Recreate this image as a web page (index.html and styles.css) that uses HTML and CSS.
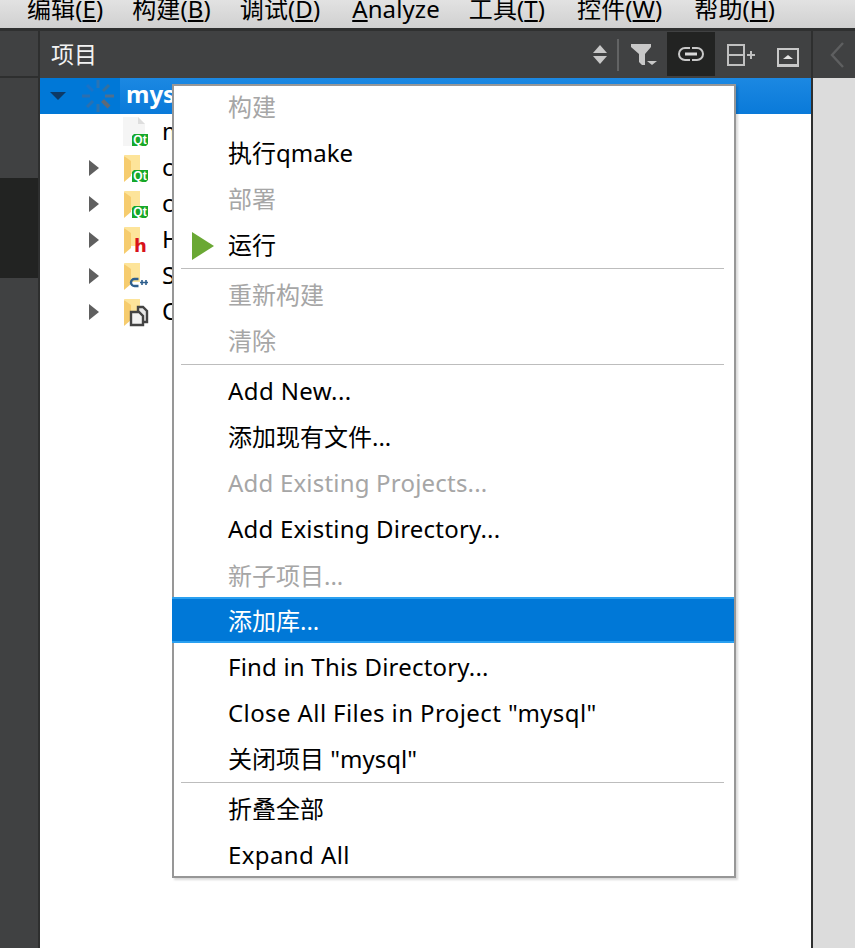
FILE: index.html
```html
<!DOCTYPE html>
<html lang="zh">
<head>
<meta charset="utf-8">
<title>Qt Creator</title>
<link rel="stylesheet" href="styles.css">
</head>
<body>
<nav class="menubar">
  <span class="mi">编辑(<u>E</u>)</span>
  <span class="mi">构建(<u>B</u>)</span>
  <span class="mi">调试(<u>D</u>)</span>
  <span class="mi mi-wide"><u>A</u>nalyze</span>
  <span class="mi">工具(<u>T</u>)</span>
  <span class="mi mi-wide">控件(<u>W</u>)</span>
  <span class="mi mi-wide">帮助(<u>H</u>)</span>
</nav>
<div class="main">
  <aside class="rail"><div class="rail-top"></div><div class="rail-active"></div></aside>
  <section class="panel">
    <header class="toolbar">
      <span class="title">项目</span>
      <div class="tools">
        <svg class="updown" width="14" height="20" viewBox="0 0 14 20"><path d="M7 0l7 8H0zM0 11h14l-7 8z" fill="#c8c8c8"/></svg>
        <span class="vsep"></span>
        <svg class="filter" width="28" height="22" viewBox="0 0 28 22"><path d="M1 0h20v3l-6 7v11h-3l-3-3v-8L1 3z" fill="#c8c8c8"/><path d="M17 17h10l-5 4z" fill="#c8c8c8"/></svg>
        <span class="active"><svg width="28" height="16" viewBox="0 0 28 16"><path d="M13 2H8a6 6 0 0 0 0 12h5M15 2h5a6 6 0 0 1 0 12h-5" fill="none" stroke="#c8c8c8" stroke-width="2"/><path d="M8 8h12" stroke="#d8d8d8" stroke-width="3"/></svg></span>
        <svg class="split" width="28" height="22" viewBox="0 0 28 22"><path d="M1 1h16v20H1zM1 11h16" fill="none" stroke="#c0c0c0" stroke-width="2"/><path d="M20 11h8M24 7v8" stroke="#c0c0c0" stroke-width="2"/></svg>
        <svg class="hide" width="22" height="19" viewBox="0 0 22 19"><path d="M1 1h20v16H1z" fill="none" stroke="#c8c8c8" stroke-width="2"/><path d="M0 16h22v3H0z" fill="#c8c8c8"/><path d="M6 11l5-4 5 4z" fill="#e4e4e4"/></svg>
      </div>
    </header>
    <div class="tree">
      <div class="row sel">
        <svg class="arrow" width="16" height="8" viewBox="0 0 16 8"><path d="M0 0h16L8 8z" fill="#0d3a66"/></svg>
        <svg class="spin" width="32" height="32" viewBox="0 0 32 32"><g stroke-width="3"><path d="M16 0v8" stroke="#2a74b4"/><path d="M27 5l-6 6" stroke="#33709f"/><path d="M32 16h-9" stroke="#4f6f8e"/><path d="M27 27l-6.500-6.500" stroke="#5d6a78" stroke-width="4"/><path d="M16 32v-8" stroke="#2f72ac"/><path d="M5 27l6-6" stroke="#2a70b0"/><path d="M0 16h8" stroke="#2a6fb0"/><path d="M5 5l6 6" stroke="#1a72c6"/></g></svg>
        <span class="name">mysql</span>
      </div>
      <div class="row file">
        <svg class="icon" width="36" height="30" viewBox="0 0 36 30"><path d="M0 0h15l7 7v22H0z" fill="#f5f5f5"/><path d="M15 0l7 7h-7z" fill="#dedede"/><path d="M11 17h14v10l-2 2H9V19z" fill="#16a82a"/><text x="17" y="27" class="qt">Qt</text></svg>
        <span class="label">mysql.pro</span>
      </div>
      <div class="row folder">
        <svg class="tri" width="10" height="16" viewBox="0 0 10 16"><path d="M0 0l10 8-10 8z" fill="#5f5f5f"/></svg>
        <svg class="icon" width="36" height="30" viewBox="0 0 36 30"><path d="M1 2h16v19H8z" fill="#fde49a"/><path d="M1 3l7 5v15l-7 6z" fill="#f6cc6e"/><path d="M11 17h14v10l-2 2H9V19z" fill="#16a82a"/><text x="17" y="27" class="qt">Qt</text></svg>
        <span class="label">config</span>
      </div>
      <div class="row folder">
        <svg class="tri" width="10" height="16" viewBox="0 0 10 16"><path d="M0 0l10 8-10 8z" fill="#5f5f5f"/></svg>
        <svg class="icon" width="36" height="30" viewBox="0 0 36 30"><path d="M1 2h16v19H8z" fill="#fde49a"/><path d="M1 3l7 5v15l-7 6z" fill="#f6cc6e"/><path d="M11 17h14v10l-2 2H9V19z" fill="#16a82a"/><text x="17" y="27" class="qt">Qt</text></svg>
        <span class="label">config</span>
      </div>
      <div class="row folder">
        <svg class="tri" width="10" height="16" viewBox="0 0 10 16"><path d="M0 0l10 8-10 8z" fill="#5f5f5f"/></svg>
        <svg class="icon" width="36" height="30" viewBox="0 0 36 30"><path d="M1 2h16v19H8z" fill="#fde49a"/><path d="M1 3l7 5v15l-7 6z" fill="#f6cc6e"/><text x="11" y="27" class="h">h</text></svg>
        <span class="label">Headers</span>
      </div>
      <div class="row folder">
        <svg class="tri" width="10" height="16" viewBox="0 0 10 16"><path d="M0 0l10 8-10 8z" fill="#5f5f5f"/></svg>
        <svg class="icon" width="36" height="30" viewBox="0 0 36 30"><path d="M1 2h16v19H8z" fill="#fde49a"/><path d="M1 3l7 5v15l-7 6z" fill="#f6cc6e"/><path d="M15.500 18h-4a3.500 3.500 0 0 0 0 7h4" fill="none" stroke="#2e5f8e" stroke-width="2.400"/><path d="M17 21.500h8M19 19v5M23 19v5" stroke="#2e5f8e" stroke-width="1.600"/></svg>
        <span class="label">Sources</span>
      </div>
      <div class="row folder">
        <svg class="tri" width="10" height="16" viewBox="0 0 10 16"><path d="M0 0l10 8-10 8z" fill="#5f5f5f"/></svg>
        <svg class="icon" width="36" height="30" viewBox="0 0 36 30"><path d="M1 2h16v19H8z" fill="#fde49a"/><path d="M1 3l7 5v15l-7 6z" fill="#f6cc6e"/><path d="M15 14v-4h5l4 4v11h-4" fill="#e8e8e8" stroke="#444" stroke-width="2.400"/><path d="M8 15h8l4 4v9H8z" fill="#f2f2f2" stroke="#444" stroke-width="2.400"/></svg>
        <span class="label">Other</span>
      </div>
    </div>
  </section>
  <aside class="right"><div class="right-top"><svg width="14" height="26" viewBox="0 0 14 26"><path d="M13 1L2 13l11 12" fill="none" stroke="#5e5f60" stroke-width="2.400"/></svg></div></aside>
</div>
<ul class="menu">
  <li class="dis">构建</li>
  <li>执行qmake</li>
  <li class="dis">部署</li>
  <li class="run"><svg class="play" width="22" height="28" viewBox="0 0 22 28"><path d="M0 0l22 14L0 28z" fill="#6aa834"/></svg>运行</li>
  <li class="sep s1"></li>
  <li class="dis">重新构建</li>
  <li class="dis">清除</li>
  <li class="sep s2"></li>
  <li class="en">Add New...</li>
  <li>添加现有文件...</li>
  <li class="dis dots">Add Existing Projects...</li>
  <li class="dots">Add Existing Directory...</li>
  <li class="dis before-hl">新子项目...</li>
  <li class="hl">添加库...</li>
  <li class="dots low">Find in This Directory...</li>
  <li class="en low">Close All Files in Project "mysql"</li>
  <li class="low">关闭项目 "mysql"</li>
  <li class="sep s3"></li>
  <li>折叠全部</li>
  <li class="en last">Expand All</li>
</ul>
</body>
</html>
```
FILE: styles.css
```css
* { box-sizing: border-box; }
html, body { margin: 0; height: 100%; overflow: hidden; }
body { width: 855px; height: 948px; font-family: "Noto Sans", "Noto Sans CJK SC", sans-serif; position: relative; background: #fff; }
.menubar { height: 28px; background: linear-gradient(#e2e2e2, #d0d0d0); display: flex; align-items: center; gap: 29px; padding-left: 27px; font-size: 24px; line-height: 28px; letter-spacing: .1px; color: #000; overflow: hidden; white-space: nowrap; }
.mi { display: block; margin-top: -10px; }
.mi-wide { margin-left: 3px; }
.main { height: 920px; display: flex; border-top: 3px solid #2f3030; }
.rail { width: 40px; background: #404142; border-right: 2px solid #2e2f2f; display: flex; flex-direction: column; }
.rail-top { height: 47px; border-bottom: 2px solid #2e2f2f; margin-bottom: 100px; }
.rail-active { height: 100px; background: #222322; }
.panel { width: 773px; display: flex; flex-direction: column; border-right: 2px solid #2e2f2f; background: #fff; }
.toolbar { height: 47px; background: #404142; display: flex; align-items: center; justify-content: space-between; padding: 0 12px 0 11px; }
.title { color: #f2f2f2; font-size: 23px; margin-top: -4px; }
.tools { display: flex; align-items: center; }
.updown { margin-right: 10px; }
.vsep { width: 2px; height: 32px; background: #626364; margin-right: 11px; }
.filter { margin-right: 9px; }
.active { width: 48px; height: 44px; background: #222322; display: flex; align-items: center; justify-content: center; margin-right: 12px; margin-top: -1px; }
.split { margin-right: 22px; }
.hide { margin-top: 6px; }
.tree { flex: 1; }
.row { height: 36px; display: flex; align-items: center; position: relative; font-size: 24px; color: #000; white-space: nowrap; }
.sel { background: #0078d7; color: #fff; font-weight: 700; padding-left: 10px; }
.arrow { margin-right: 16px; }
.spin { margin-right: 6px; }
.name { flex: 1; height: 36px; line-height: 32px; padding-left: 6px; background: linear-gradient(#1c88e2, #0a7ad9); }
.file, .folder { padding-left: 83px; }
.folder .tri { position: absolute; left: 49px; top: 10px; }
.icon { margin-right: 3px; }
.label { margin-top: -4px; }
.qt { font: 700 12px "Liberation Sans", sans-serif; fill: #fff; text-anchor: middle; }
.h { font: 700 18px "DejaVu Sans", sans-serif; fill: #d8121b; }
.right { flex: 1; background: #dcdcdc; }
.right-top { height: 47px; background: #404142; display: flex; align-items: center; padding-left: 17px; }
.menu { position: absolute; left: 172px; top: 84px; width: 564px; height: 794px; margin: 0; padding: 0 2px; list-style: none; background: #fff; border: 2px solid #979797; box-shadow: 2px 2px 2px rgba(0,0,0,.15); font-size: 24px; color: #000; }
.menu li { height: 46px; line-height: 42px; padding-left: 52px; position: relative; white-space: nowrap; }
.menu li.dis { color: #a6a6a6; }
.menu li.en { letter-spacing: .4px; }
.menu li.dots { letter-spacing: .2px; }
.menu li.sep { padding: 0; margin-left: 5px; width: 543px; }
.menu li.sep::before { content: ""; display: block; height: 1px; background: #bdbdbd; position: relative; }
.menu li.s1 { height: 4px; }
.menu li.s1::before { top: -2px; }
.menu li.s2 { height: 4px; }
.menu li.s2::before { top: -2px; }
.menu li.s3 { height: 7px; }
.menu li.s3::before { top: 1px; }
.menu li.before-hl { height: 43px; line-height: 44px; }
.menu li.low { line-height: 48px; }
.menu li.last { height: 42px; }
.menu li.hl { background: #0078d7; color: #fff; margin: 0 -2px 0 -4px; padding: 2px 0 0 56px; border-top: 2px solid #2aa0f0; border-bottom: 2px solid #2aa0f0; line-height: 40px; }
.play { position: absolute; left: 16px; top: 8px; }
```
